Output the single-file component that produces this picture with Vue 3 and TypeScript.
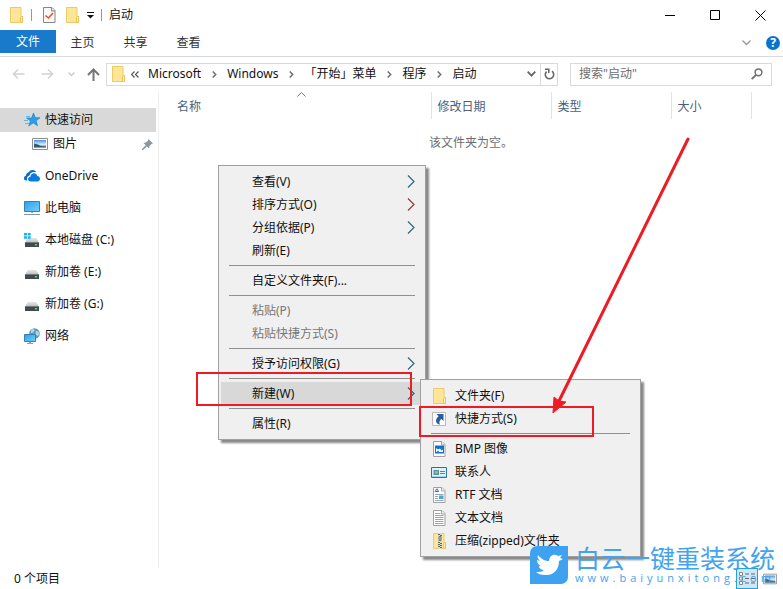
<script setup lang="ts">
import { ref } from 'vue'

interface NavEntry { label: string; icon: string; nested?: boolean; selected?: boolean }
interface MenuEntry { label?: string; icon?: string; arrow?: boolean; disabled?: boolean; active?: boolean; separator?: boolean }

const query = ref('')
const tabs: string[] = ['主页', '共享', '查看']
const crumbs: string[] = ['Microsoft', 'Windows', '「开始」菜单', '程序', '启动']
const columns: string[] = ['名称', '修改日期', '类型', '大小']

const nav: NavEntry[] = [
  { label: '快速访问', icon: 'star', selected: true },
  { label: '图片', icon: 'picture', nested: true },
  { label: 'OneDrive', icon: 'cloud' },
  { label: '此电脑', icon: 'computer' },
  { label: '本地磁盘 (C:)', icon: 'system' },
  { label: '新加卷 (E:)', icon: 'drive' },
  { label: '新加卷 (G:)', icon: 'drive' },
  { label: '网络', icon: 'network' },
]

const contextMenu: MenuEntry[] = [
  { label: '查看(V)', arrow: true },
  { label: '排序方式(O)', arrow: true },
  { label: '分组依据(P)', arrow: true },
  { label: '刷新(E)' },
  { separator: true },
  { label: '自定义文件夹(F)...' },
  { separator: true },
  { label: '粘贴(P)', disabled: true },
  { label: '粘贴快捷方式(S)', disabled: true },
  { separator: true },
  { label: '授予访问权限(G)', arrow: true },
  { separator: true },
  { label: '新建(W)', arrow: true, active: true },
  { separator: true },
  { label: '属性(R)' },
]

const newMenu: MenuEntry[] = [
  { label: '文件夹(F)', icon: 'folder' },
  { label: '快捷方式(S)', icon: 'shortcut' },
  { separator: true },
  { label: 'BMP 图像', icon: 'bmp' },
  { label: '联系人', icon: 'contact' },
  { label: 'RTF 文档', icon: 'rtf' },
  { label: '文本文档', icon: 'text' },
  { label: '压缩(zipped)文件夹', icon: 'zip' },
]
</script>

<template>
  <div class="window">
    <svg class="defs" aria-hidden="true">
      <defs>
        <linearGradient id="g-screen" x1="0" y1="0" x2="1" y2="1">
          <stop offset="0" stop-color="#2f9fe8" /><stop offset="1" stop-color="#6fd0ff" />
        </linearGradient>
        <linearGradient id="g-sky" x1="0" y1="0" x2="0" y2="1">
          <stop offset="0" stop-color="#4f8fdc" /><stop offset="0.55" stop-color="#d8ecf8" /><stop offset="1" stop-color="#3d7389" />
        </linearGradient>
        <linearGradient id="g-drive" x1="0" y1="0" x2="0" y2="1">
          <stop offset="0" stop-color="#e4e6e8" /><stop offset="1" stop-color="#bcc0c4" />
        </linearGradient>
        <symbol id="folder" viewBox="0 0 16 16">
          <path d="M2 0h11v10h2v6H2z" fill="#ffe596" />
          <path d="M2.500.500h10.500v9h1.500v6h-12z" fill="none" stroke="#eccb66" />
          <path d="M12.500 15.500v-5l1-1h1v6z" fill="#fff0b5" stroke="#e8c35a" />
        </symbol>
        <symbol id="star" viewBox="0 0 16 16">
          <path d="M9.500 1l1.700 4.600 4.800.2-3.800 3 1.300 4.900-4.300-2.800-4.500 3 1.700-5L2.500 6h5z" fill="#2a9fe8" stroke="#167fc8" stroke-width=".6" />
          <path d="M2 4.500h4M0 8.500h4M1 11.500h4" stroke="#5cb8f0" />
        </symbol>
        <symbol id="picture" viewBox="0 0 16 16">
          <path d="M.500 2.500h15v11H.500z" fill="#fff" stroke="#8b8f93" />
          <path d="M2 4h12v8H2z" fill="url(#g-sky)" />
          <path d="M2 7.500l4 1 3 1.500 5 .500V12H2z" fill="#2e5d78" />
          <path d="M2 11h12v1H2z" fill="#6fa3c4" />
        </symbol>
        <symbol id="cloud" viewBox="0 0 16 16">
          <path d="M3.200 12.500H2.500C.8 12.500 0 11.500 0 10.200 0 9 .9 8 2 7.800 2 5.500 3.400 4.300 5 4.300c.4-1.500 2-2.300 3.500-2.300 1.700 0 3 .9 3.700 2.300C8.400 3.400 5.900 5.200 5.500 7.500 3.100 8 2.500 10.500 3.200 12.500z" fill="#0a6ccc" />
          <path d="M6.500 13.500c-1.500 0-2.500-1-2.500-2.400 0-1.300 1-2.300 2.400-2.400.2-2 1.700-3.400 3.600-3.400 1.700 0 2.900 1 3.300 2.600 1.600.1 2.700 1.300 2.700 2.800s-1.200 2.800-2.700 2.800z" fill="#0a7be0" />
        </symbol>
        <symbol id="computer" viewBox="0 0 16 16">
          <path d="M.500 1.500h15v10H.500z" fill="url(#g-screen)" stroke="#3d7fab" />
          <path d="M7 12h2v1H7z" fill="#a8b4bc" />
          <path d="M0 14.500h16" stroke="#8499a8" />
        </symbol>
        <symbol id="drive" viewBox="0 0 16 16">
          <path d="M4 6h8l3 4.500H1z" fill="url(#g-drive)" />
          <path d="M1 10h14v5H1z" fill="#45494d" />
          <path d="M1 10.500h14" stroke="#74797e" />
          <path d="M11 12h2v1.500h-2z" fill="#4fe06a" />
        </symbol>
        <symbol id="system" viewBox="0 0 16 16">
          <use href="#drive" />
          <path d="M0 1h3v2.500H0zM3.700 1h3v2.500h-3zM0 4.200h3v2.500H0zM3.700 4.200h3v2.500h-3z" fill="#18b4ee" />
        </symbol>
        <symbol id="network" viewBox="0 0 16 16">
          <circle cx="10.500" cy="5.500" r="5.300" fill="#5b9dbd" />
          <path d="M7 2c2-1.500 3.500-1 3.500.5S8.500 5 7 5zM12 3l2.500.5.8 3-2 1.500-1.800-2z" fill="#b3d6e2" />
          <path d="M.500 6.500h11v7H.500z" fill="url(#g-screen)" stroke="#3a7fb4" />
          <path d="M5 14h2v1H5zM3 15h6v1H3z" fill="#8da3b0" />
        </symbol>
        <symbol id="page" viewBox="0 0 16 16">
          <path d="M2.500.500h8.500l3 3v12H2.500z" fill="#fff" stroke="#a0a0a0" />
          <path d="M10.500.500v3.500h3.500" fill="#eee" stroke="#a8a8a8" />
        </symbol>
        <symbol id="shortcut" viewBox="0 0 16 16">
          <path d="M1.500 1.500h13v13h-13z" fill="#fff" stroke="#b9b9b9" />
          <path d="M5.500 3h7v7l-2.200-2C8.500 9.500 7.800 11.200 9 13.500 4.500 12.800 3.500 8.500 7.600 5.200z" fill="#2c5d9b" />
        </symbol>
        <symbol id="bmp" viewBox="0 0 16 16">
          <use href="#page" />
          <path d="M4 4.500h9v8H4z" fill="#0c74d0" />
          <path d="M5 7l2 1.500 2-1 1.500 2L12 8.500V11H5z" fill="#fff" />
          <path d="M5 11.500l2-2 1.500 2z" fill="#0c74d0" />
        </symbol>
        <symbol id="contact" viewBox="0 0 16 16">
          <path d="M.500 3.500h15v10H.500z" fill="#dff2fb" stroke="#26779f" />
          <path d="M1 12h14v1H1z" fill="#a4d5ea" />
          <path d="M2.500 6h5.500v5H2.500z" fill="#5295b9" />
          <circle cx="5.300" cy="8.300" r="1.400" fill="#d8ae55" />
          <path d="M9 7.500h5M9 9.500h5" stroke="#458dac" />
        </symbol>
        <symbol id="rtf" viewBox="0 0 16 16">
          <use href="#page" />
          <path d="M4 5l1.500-3h1L7.500 5M5 4.500h2" fill="none" stroke="#4a5ad8" />
          <path d="M4 7.500h8.500M4 9.500h3M4 11.500h3M4 13.500h8.500" stroke="#8da8c4" />
          <path d="M8 8.500h4.500v3.500H8z" fill="#4da5ce" />
        </symbol>
        <symbol id="text" viewBox="0 0 16 16">
          <use href="#page" />
          <path d="M4 3.500h5.500M4 5.500h8.500M4 7.500h8.500M4 9.500h8.500M4 11.500h8.500M4 13.500h8.500" stroke="#a2a2a2" />
        </symbol>
        <symbol id="zip" viewBox="0 0 16 16">
          <use href="#folder" />
          <path d="M7 0h4v16H7z" fill="#dcd8c8" />
          <path d="M7 9.500h2M9 10.500h2M7 11.500h2M9 12.500h2M7 13.500h2M9 14.500h2M7 1.500h2M9 2.500h2" stroke="#666" />
          <path d="M8 3.500h2v4H8z" fill="#bbb" stroke="#777" />
        </symbol>
        <symbol id="properties" viewBox="0 0 16 16">
          <path d="M2.500.500h8.500l3 3v12H2.500z" fill="#f8f8f8" stroke="#858585" />
          <path d="M10.500.500v3.500h3.500" fill="#e5e5e5" stroke="#858585" />
          <path d="M4.500 8.500l3 2.500 4.500-5" fill="none" stroke="#e65424" stroke-width="1.600" />
        </symbol>
      </defs>
    </svg>

    <header class="titlebar">
      <div class="quick">
        <svg class="icon"><use href="#folder" /></svg>
        <i class="bar" />
        <button class="plain" aria-label="属性"><svg class="icon"><use href="#properties" /></svg></button>
        <button class="plain" aria-label="新建文件夹"><svg class="icon"><use href="#folder" /></svg></button>
        <button class="plain" aria-label="自定义快速访问工具栏">
          <svg width="7" height="7" viewBox="0 0 7 7"><path d="M0 .5h7" stroke="#111" /><path d="M0 3h7L3.500 6.500z" fill="#111" /></svg>
        </button>
        <i class="bar" />
      </div>
      <h1 class="title">启动</h1>
      <div class="caption">
        <button class="plain" aria-label="最小化"><svg width="11" height="11"><path d="M0 5.500h10" stroke="#000" /></svg></button>
        <button class="plain" aria-label="最大化"><svg width="11" height="11"><path d="M.5.5h9v9H.5z" fill="none" stroke="#000" /></svg></button>
        <button class="plain" aria-label="关闭"><svg width="11" height="11"><path d="M.5.5l10 10M10.500.5l-10 10" stroke="#000" /></svg></button>
      </div>
    </header>

    <nav class="ribbon">
      <button class="tab file">文件</button>
      <button v-for="tab in tabs" :key="tab" class="tab">{{ tab }}</button>
      <div class="ribbon-end">
        <button class="plain" aria-label="展开功能区"><svg width="9" height="6"><path d="M.5.500l4 4 4-4" fill="none" stroke="#999" stroke-width="1.300" /></svg></button>
        <button class="plain help" aria-label="帮助">?</button>
      </div>
    </nav>

    <div class="address-row">
      <div class="history">
        <button class="plain" aria-label="后退"><svg width="13" height="12"><path d="M12.500 6H1.500M6 1.500L1.500 6 6 10.500" fill="none" stroke="#d2d2d2" stroke-width="1.500" /></svg></button>
        <button class="plain" aria-label="前进"><svg width="13" height="12"><path d="M.500 6h11M7 1.500l4.500 4.500L7 10.500" fill="none" stroke="#d2d2d2" stroke-width="1.500" /></svg></button>
        <button class="plain" aria-label="最近位置"><svg width="7" height="5"><path d="M.500.500l3 3 3-3" fill="none" stroke="#c8c8c8" stroke-width="1.300" /></svg></button>
        <button class="plain" aria-label="上移"><svg width="13" height="13"><path d="M6.500 13V1.500M1 7l5.500-5.500L12 7" fill="none" stroke="#757575" stroke-width="2" /></svg></button>
      </div>
      <div class="address">
        <svg class="icon"><use href="#folder" /></svg>
        <svg class="more" width="8" height="7"><path d="M3.500.500l-3 3 3 3M7.500.500l-3 3 3 3" fill="none" stroke="#555" stroke-width="1.200" /></svg>
        <template v-for="(crumb, i) in crumbs" :key="crumb">
          <svg v-if="i" class="sep" width="5" height="7"><path d="M.700.500l3 3-3 3" fill="none" stroke="#707070" stroke-width="1.500" /></svg>
          <a href="#" class="crumb">{{ crumb }}</a>
        </template>
        <div class="address-end">
          <button class="plain" aria-label="以前的位置"><svg width="9" height="6"><path d="M.700.700l3.800 4 3.800-4" fill="none" stroke="#666" stroke-width="1.800" /></svg></button>
          <button class="plain refresh" aria-label="刷新"><svg width="11" height="12" viewBox="0 0 11 12"><path d="M2.500 3.600a4.200 4.200 0 1 0 5.500-.4M1 1.200h3.800V5" fill="none" stroke="#686868" stroke-width="1.600" /></svg></button>
        </div>
      </div>
      <label class="search">
        <input v-model="query" type="text" aria-label="搜索" placeholder="搜索&quot;启动&quot;" />
        <svg width="12" height="12"><circle cx="7.500" cy="4.300" r="3.400" fill="none" stroke="#707070" stroke-width="1.500" /><path d="M5 6.800L.7 11.200" stroke="#707070" stroke-width="1.800" /></svg>
      </label>
    </div>

    <div class="body">
      <aside class="sidebar">
        <a v-for="item in nav" :key="item.label" href="#" class="nav-item" :class="{ nested: item.nested, selected: item.selected }">
          <svg class="icon"><use :href="'#' + item.icon" /></svg>
          <span>{{ item.label }}</span>
          <svg v-if="item.nested" class="pin" width="11" height="11"><path d="M6.500 0L11 4.500 9.500 5 7.500 7l-.5 2.500L1.500 4 4 3.500 6 1.500zM4 6l1.200 1.200L1 11H0v-1z" fill="#8c969e" /></svg>
        </a>
      </aside>
      <main class="content">
        <table class="files">
          <thead>
            <tr>
              <th v-for="(column, i) in columns" :key="column" scope="col">
                <span>{{ column }}</span>
                <svg v-if="i === 0" class="sort" width="9" height="5"><path d="M.500 4.500l4-4 4 4" fill="none" stroke="#777" /></svg>
              </th>
              <td />
            </tr>
          </thead>
        </table>
        <p class="empty">该文件夹为空。</p>
      </main>
    </div>

    <footer class="status">
      <span>0 个项目</span>
      <div class="views">
        <button class="plain view on" aria-label="详细信息">
          <svg width="17" height="13"><path d="M.500.500h3v3h-3zM.500 5h3v3h-3zM.500 9.500h3v3h-3z" fill="#fff" stroke="#888" /><path d="M6 2h4M12 2h4M6 6.500h4M12 6.500h4M6 11h4M12 11h4" stroke="#666" /></svg>
        </button>
        <button class="plain view" aria-label="大缩略图"><svg class="thumb"><use href="#picture" /></svg></button>
      </div>
    </footer>

    <div class="menu context" role="menu">
      <template v-for="(entry, i) in contextMenu" :key="i">
        <hr v-if="entry.separator" />
        <button v-else class="entry" role="menuitem" :class="{ active: entry.active }" :disabled="entry.disabled">
          <span>{{ entry.label }}</span>
          <svg v-if="entry.arrow" class="arrow" width="8" height="13"><path d="M1 .500l6 6-6 6" fill="none" :stroke="i === 1 ? '#8c3b3b' : '#2f6580'" stroke-width="1.200" /></svg>
        </button>
      </template>
    </div>

    <div class="menu submenu" role="menu">
      <template v-for="(entry, i) in newMenu" :key="i">
        <hr v-if="entry.separator" />
        <button v-else class="entry" role="menuitem">
          <svg class="icon"><use :href="'#' + entry.icon" /></svg>
          <span>{{ entry.label }}</span>
        </button>
      </template>
    </div>

    <div class="mark mark-new" />
    <div class="mark mark-shortcut" />
    <svg class="pointer" width="140" height="280" viewBox="0 0 140 280" aria-hidden="true">
      <path d="M136 2L7 264" stroke="#ed1c24" stroke-width="3" stroke-linecap="round" />
      <path d="M1 276L2 260l5 4 7 1z" fill="#ed1c24" stroke="#ed1c24" stroke-width="1" />
    </svg>

    <div class="watermark">
      <svg width="38" height="38" viewBox="0 0 38 38">
        <path d="M7 0h31v31a7 7 0 0 1-7 7H0V7a7 7 0 0 1 7-7z" fill="#3ea2f0" />
        <path d="M8 9c4 5 8 6 11 6 0-5 5-8 9-5l4-1-2 3 3 1-4 2c0 9-6 15-14 14-4 0-7-1-9-3 3 0 6 0 8-2-3 0-5-2-5-4h2c-3-1-4-4-4-6l3 1c-2-2-3-4-2-6z" fill="#fff" />
      </svg>
      <div class="brand">
        <strong>白云一键重装系统</strong>
        <span>www.baiyunxitong.com</span>
      </div>
    </div>
  </div>
</template>

<style>
body { margin: 0; }
</style>

<style scoped>
.window {
  position: relative;
  display: flex;
  flex-direction: column;
  min-height: 100vh;
  overflow: hidden;
  background: #fff;
  color: #111;
  font: 12px/18px "Noto Sans", "Noto Sans CJK SC", sans-serif;
}
.window *, .window { box-sizing: border-box; }
button, input { font: inherit; color: inherit; }
a { color: inherit; text-decoration: none; }
svg { display: block; flex: none; }
.defs { position: absolute; width: 0; height: 0; }
.icon { width: 16px; height: 16px; }
.plain { display: flex; align-items: center; justify-content: center; padding: 0; border: 0; background: none; }

.titlebar { display: flex; align-items: center; height: 30px; padding-left: 8px; }
.quick { display: flex; align-items: center; gap: 7px; }
.bar { width: 1px; height: 12px; margin-right: 2px; background: #999; }
.title { margin: 0 0 0 5px; font-size: 12px; font-weight: 400; }
.caption { display: flex; margin-left: auto; }
.caption button { width: 45px; height: 28px; }

.ribbon { display: flex; height: 27px; border-bottom: 1px solid #d9dadb; }
.tab { width: 53px; height: 25px; padding: 0; border: 0; background: none; color: #333; }
.file { width: 56px; height: 23px; background: #1979ca; color: #fff; }
.ribbon-end { display: flex; align-items: center; gap: 15px; margin-left: auto; padding-right: 3px; }
.help { width: 14px; height: 14px; border-radius: 50%; background: #0a72d0; color: #fff; font-weight: 700; }

.address-row { display: flex; align-items: center; height: 34px; padding: 0 11px 0 12px; }
.history { display: flex; align-items: center; gap: 16px; width: 94px; }
.history button:nth-child(3) { margin: 0 -4px 0 -2px; }
.address { display: flex; flex: 1; align-items: center; height: 23px; padding-left: 3px; border: 1px solid #d9d9d9; }
.more { margin: 0 9px 0 5px; }
.sep { margin: 0 10px 0 11px; }
.crumb { white-space: nowrap; }
.address-end { display: flex; align-self: stretch; margin-left: auto; }
.address-end button { width: 17px; }
.address-end .refresh { border-left: 1px solid #d9d9d9; }
.search { display: flex; align-items: center; width: 202px; height: 23px; margin-left: 12px; padding: 0 8px; border: 1px solid #d9d9d9; }
.search input { flex: 1; min-width: 0; padding: 0; border: 0; outline: 0; background: none; }
.search input::placeholder { color: #6d6d6d; opacity: 1; }

.body { display: flex; flex: 1; }
.sidebar { width: 159px; padding: 17px 2px 0 0; border-right: 1px solid #f0f0f0; }
.nav-item { display: flex; align-items: center; gap: 5px; height: 24px; margin-bottom: 8px; padding-left: 24px; white-space: nowrap; }
.nav-item.selected { margin-bottom: 0; background: #d9d9d9; }
.nav-item.nested { padding-left: 32px; }
.pin { margin: 0 3px 0 auto; }
.content { flex: 1; min-width: 0; padding-top: 1px; }
.files { width: 100%; table-layout: fixed; border-collapse: collapse; }
.files th { position: relative; width: 120px; height: 27px; padding: 2px 6px 0; border-right: 1px solid #e3e3e3; color: #4c607a; font-weight: 400; text-align: left; }
.files th:first-child { width: 272px; padding-left: 18px; }
.files th:nth-child(4) { width: 80px; }
.sort { position: absolute; top: 0; left: 51%; }
.empty { margin: 15px 0 0; padding: 0 4px; text-align: center; color: #6d6d6d; }

.status { display: flex; align-items: center; justify-content: space-between; height: 21px; padding: 0 2px 0 14px; }
.views { display: flex; gap: 1px; }
.view { width: 22px; height: 21px; }
.view.on { border: 1px solid #26a0da; background: #cce8f7; }
.thumb { width: 14px; height: 14px; }

.menu { position: absolute; padding: 4px 2px; border: 1px solid #a0a0a0; background: #f0f0f0; box-shadow: 3px 3px 2px #888; }
.context { top: 165px; left: 218px; width: 208px; }
.submenu { top: 379px; left: 420px; width: 221px; }
.menu hr { height: 1px; margin: 3px 8px; border: 0; background: #909090; }
.entry { display: flex; align-items: center; width: 100%; height: 23px; padding: 0 8px 0 31px; border: 0; background: none; color: #111; text-align: left; }
.entry.active { background: #d8d8d8; }
.entry:disabled { color: #777; }
.arrow { margin-left: auto; }
.submenu .entry { gap: 8px; padding-left: 8px; }

.mark { position: absolute; border: 2px solid #ed1c24; pointer-events: none; }
.mark-new { top: 372px; left: 196px; width: 216px; height: 34px; }
.mark-shortcut { top: 406px; left: 419px; width: 175px; height: 31px; }
.pointer { position: absolute; top: 137px; left: 552px; pointer-events: none; }

.watermark { position: absolute; right: 9px; bottom: 5px; display: flex; gap: 7px; color: #42a3ee; }
.brand { display: flex; flex-direction: column; width: 199px; white-space: nowrap; }
.brand strong { font-size: 25px; font-weight: 400; line-height: 25px; }
.brand span { font: 11px/13px "Open Sans", sans-serif; letter-spacing: 4px; }
</style>
